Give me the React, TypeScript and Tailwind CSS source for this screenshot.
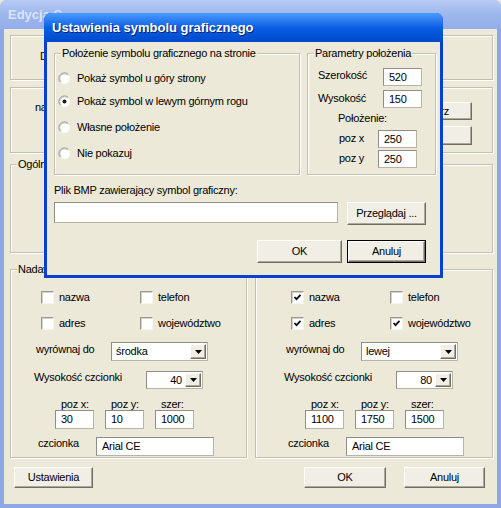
import React from 'react';

function Btn({
  children,
  className = '',
  isDefault = false,
}: {
  children: React.ReactNode;
  className?: string;
  isDefault?: boolean;
}) {
  const face = (
    <div className="flex h-full w-full items-center justify-center border border-t-white border-l-white border-r-[#716f64] border-b-[#716f64] bg-[#f1efe5] shadow-[inset_-1px_-1px_0_#aca899]">
      {children}
    </div>
  );
  if (isDefault) {
    return <div className={`border border-black ${className}`}>{face}</div>;
  }
  return <div className={className}>{face}</div>;
}

function Field({ value = '', className = '', right = false }: { value?: string; className?: string; right?: boolean }) {
  return (
    <div
      className={`flex items-center border border-[#b6b4a8] border-t-[#8f8d84] border-l-[#8f8d84] bg-white px-[5px] ${
        right ? 'justify-end' : ''
      } ${className}`}
    >
      {value}
    </div>
  );
}

function Check({ checked = false, label }: { checked?: boolean; label: string }) {
  return (
    <div className="flex items-center">
      <div className="flex h-[13px] w-[13px] items-center justify-center border border-t-[#9a9891] border-l-[#9a9891] border-r-[#f5f4ee] border-b-[#f5f4ee] bg-white shadow-[inset_1px_1px_0_#d6d3c6]">
        {checked && (
          <svg width="9" height="9" viewBox="0 0 9 9">
            <polyline points="1.5,4 3.5,6.2 7.5,1.8" fill="none" stroke="#111" strokeWidth="1.8" />
          </svg>
        )}
      </div>
      <span className="ml-[5px]">{label}</span>
    </div>
  );
}

function Radio({ checked = false, label }: { checked?: boolean; label: string }) {
  return (
    <div className="flex h-[13px] items-center">
      <svg width="13" height="13" viewBox="0 0 13 13" className="ml-[3px]">
        <circle cx="6.5" cy="6.5" r="5.5" fill="white" />
        <path d="M10.4 2.6 A5.5 5.5 0 0 0 2.6 10.4" fill="none" stroke="#8c8a82" />
        <path d="M2.6 10.4 A5.5 5.5 0 0 0 10.4 2.6" fill="none" stroke="#f4f3ec" />
        <path d="M9.7 3.3 A4.5 4.5 0 0 0 3.3 9.7" fill="none" stroke="#cfccbf" />
        {checked && <circle cx="6.5" cy="6.5" r="2" fill="#1a1a1a" />}
      </svg>
      <span className="ml-[6px]">{label}</span>
    </div>
  );
}

function Combo({ value, className = '', right = false }: { value: string; className?: string; right?: boolean }) {
  return (
    <div className={`flex items-center border border-[#b6b4a8] border-t-[#8f8d84] border-l-[#8f8d84] bg-white p-[1px] ${className}`}>
      <div className={`flex flex-1 px-[3px] ${right ? 'justify-end' : ''}`}>{value}</div>
      <Btn className="h-full w-[16px]">
        <svg width="7" height="4" viewBox="0 0 7 4">
          <polygon points="0,0 7,0 3.5,4" fill="#000" />
        </svg>
      </Btn>
    </div>
  );
}

function Group({
  title,
  className = '',
  children,
}: {
  title?: string;
  className?: string;
  children?: React.ReactNode;
}) {
  return (
    <div className={`relative border border-[#c2bfb0] shadow-[1px_1px_0_white,inset_1px_1px_0_white] ${className}`}>
      {title && (
        <span className="absolute left-[6px] top-[-7px] bg-[#ece9d8] px-[1px] leading-[13px]">{title}</span>
      )}
      {children}
    </div>
  );
}

function PrintGroup({
  shift,
  checks,
  align,
  size,
  pos,
}: {
  shift: number;
  checks: [boolean, boolean, boolean, boolean];
  align: string;
  size: string;
  pos: [string, string, string];
}) {
  const pl = shift ? 'pl-[5px]' : '';
  return (
    <div className={`pt-[21px] ${pl}`}>
      <div className="ml-[30px] flex h-[12px]">
        <div className="w-[99px]">
          <Check checked={checks[0]} label="nazwa" />
        </div>
        <Check checked={checks[1]} label="telefon" />
      </div>
      <div className="ml-[30px] mt-[14px] flex h-[12px]">
        <div className="w-[99px]">
          <Check checked={checks[2]} label="adres" />
        </div>
        <Check checked={checks[3]} label="województwo" />
      </div>
      <div className="mt-[13px] flex h-[19px] items-start">
        <span className="ml-[25px] w-[75px] pt-[1px]">wyrównaj do</span>
        <Combo value={align} className="h-[19px] w-[97px]" />
      </div>
      <div className="mt-[10px] flex h-[18px] items-start">
        <span className="ml-[23px] w-[112px]">Wysokość czcionki</span>
        <Combo value={size} right className="h-[18px] w-[57px]" />
      </div>
      <div className="mt-[9px] flex h-[12px] leading-[12px]">
        <span className="ml-[50px] w-[50px]">poz x:</span>
        <span className="w-[50px]">poz y:</span>
        <span>szer:</span>
      </div>
      <div className="ml-[44px] flex h-[19px] gap-[11px]">
        <Field value={pos[0]} className="h-[19px] w-[39px]" />
        <Field value={pos[1]} className="h-[19px] w-[39px]" />
        <Field value={pos[2]} className="h-[19px] w-[39px]" />
      </div>
      <div className="mt-[8px] flex h-[19px] items-start">
        <span className="ml-[27px] w-[58px]">czcionka</span>
        <Field value="Arial CE" className="h-[19px] w-[118px]" />
      </div>
    </div>
  );
}

export default function App() {
  return (
    <div className="relative h-[508px] w-[501px] overflow-hidden bg-[#ece9d8] font-['Liberation_Sans',Arial,sans-serif] text-[11px] leading-[13px] tracking-[-0.25px] text-black">
      {/* main window (inactive) */}
      <div className="flex h-full w-full flex-col rounded-t-[7px] bg-[#8ea8e6]">
        <div className="flex h-[29px] items-center rounded-t-[7px] bg-gradient-to-b from-[#b7cbf5] via-[#9db6ec] to-[#93ade9] pl-[8px]">
          <span className="text-[13px] font-bold tracking-normal text-[#dbe4f8]">Edycja S</span>
        </div>
        <div className="mx-[4px] mb-[4px] flex-1 bg-[#ece9d8] pl-[6px] pr-[4px] pt-[6px]">
          <Group className="h-[45px]">
            <div className="ml-[29px] mt-[14px]">D</div>
          </Group>
          <Group className="mt-[7px] flex h-[66px] items-start justify-between">
            <div className="ml-[24px] mt-[13px]">na</div>
            <div className="mr-[20px] mt-[14px] flex flex-col gap-[6px]">
              <Btn className="h-[18px] w-[84px]">Wybierz</Btn>
              <Btn className="h-[19px] w-[84px]">Usuń</Btn>
            </div>
          </Group>
          <Group title="Ogólne" className="mt-[11px] h-[89px]" />
          <div className="mt-[16px] flex gap-[8px]">
            <Group title="Nadawca" className="h-[189px] w-[237px]">
              <PrintGroup
                shift={0}
                checks={[false, false, false, false]}
                align="środka"
                size="40"
                pos={['30', '10', '1000']}
              />
            </Group>
            <Group title="Odbiorca" className="h-[189px] w-[238px]">
              <PrintGroup
                shift={1}
                checks={[true, false, true, true]}
                align="lewej"
                size="80"
                pos={['1100', '1750', '1500']}
              />
            </Group>
          </div>
          <div className="mt-[9px] flex h-[21px]">
            <Btn className="ml-[4px] h-[21px] w-[79px]">Ustawienia</Btn>
            <Btn className="ml-[211px] h-[21px] w-[82px]">OK</Btn>
            <Btn className="ml-[18px] h-[21px] w-[81px]">Anuluj</Btn>
          </div>
        </div>
      </div>

      {/* dialog window (active) */}
      <div className="absolute left-[44px] top-[13px] flex h-[265px] w-[399px] flex-col rounded-t-[7px] bg-[#0a3fd2]">
        <div className="flex h-[29px] items-center rounded-t-[7px] bg-gradient-to-b from-[#4a9bff] via-[#0a5fe3] to-[#0049cc] pl-[8px]">
          <span className="text-[13px] font-bold tracking-normal text-white [text-shadow:1px_1px_0_#0a1f6e]">
            Ustawienia symbolu graficznego
          </span>
        </div>
        <div className="mx-[3px] mb-[3px] flex-1 bg-[#ece9d8] pl-[7px] pt-[11px]">
          <div className="flex gap-[7px]">
            <Group title="Położenie symbolu graficznego na stronie" className="h-[122px] w-[246px]">
              <div className="pt-[18px]">
                <Radio label="Pokaż symbol u góry strony" />
                <div className="mt-[10px]">
                  <Radio checked label="Pokaż symbol w lewym górnym rogu" />
                </div>
                <div className="mt-[13px]">
                  <Radio label="Własne położenie" />
                </div>
                <div className="mt-[13px]">
                  <Radio label="Nie pokazuj" />
                </div>
              </div>
            </Group>
            <Group title="Parametry położenia" className="h-[122px] w-[129px]">
              <div className="pt-[14px]">
                <div className="flex h-[18px] items-start">
                  <span className="ml-[10px] w-[65px] pt-[1px]">Szerokość</span>
                  <Field value="520" className="h-[18px] w-[39px]" />
                </div>
                <div className="mt-[4px] flex h-[18px] items-start">
                  <span className="ml-[10px] w-[65px] pt-[2px]">Wysokość</span>
                  <Field value="150" className="h-[18px] w-[39px]" />
                </div>
                <div className="ml-[30px] mt-[4px] h-[13px]">Położenie:</div>
                <div className="mt-[5px] flex h-[18px] items-start">
                  <span className="ml-[31px] w-[39px] pt-[2px]">poz x</span>
                  <Field value="250" className="h-[18px] w-[39px]" />
                </div>
                <div className="mt-[2px] flex h-[18px] items-start">
                  <span className="ml-[31px] w-[39px] pt-[2px]">poz y</span>
                  <Field value="250" className="h-[18px] w-[39px]" />
                </div>
              </div>
            </Group>
          </div>
          <div className="mt-[9px] h-[13px]">Plik BMP zawierający symbol graficzny:</div>
          <div className="mt-[5px] flex items-start">
            <Field className="h-[21px] w-[284px]" />
            <Btn className="ml-[9px] h-[23px] w-[79px]">Przeglądaj ...</Btn>
          </div>
          <div className="mt-[15px] flex">
            <Btn className="ml-[203px] h-[23px] w-[85px]">OK</Btn>
            <Btn isDefault className="ml-[5px] h-[23px] w-[79px]">
              Anuluj
            </Btn>
          </div>
        </div>
      </div>
    </div>
  );
}
